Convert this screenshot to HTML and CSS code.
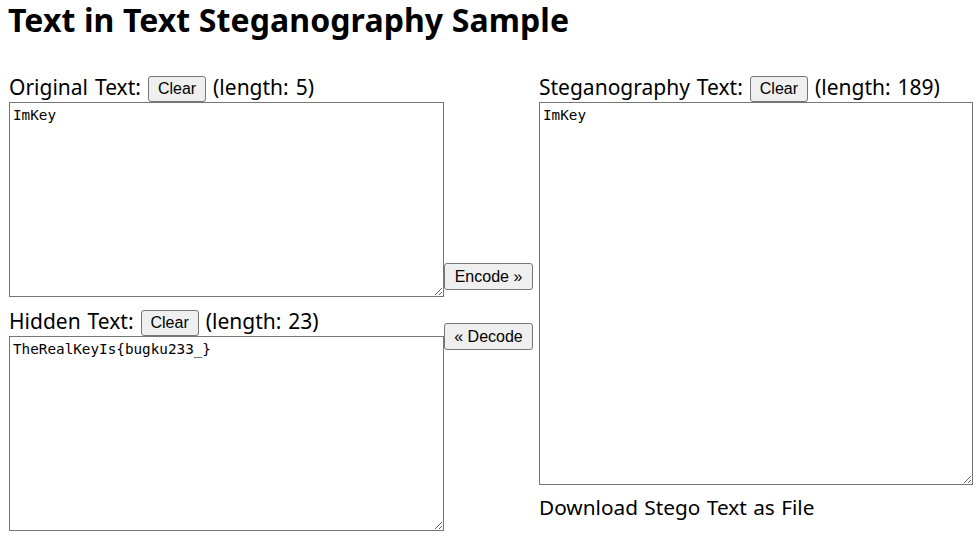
FILE: index.html
```html
<!DOCTYPE html>
<html>
<head>
<meta charset="utf-8">
<title>Text in Text Steganography Sample</title>
<link rel="stylesheet" href="styles.css">
</head>
<body>
<h1 class="title">Text in Text Steganography Sample</h1>
<div class="main">
  <div class="col left">
    <div class="label">Original Text: <button class="btn">Clear</button> (length: 5)</div>
    <textarea class="box small">ImKey</textarea>
    <div class="label second">Hidden Text: <button class="btn">Clear</button> (length: 23)</div>
    <textarea class="box small">TheRealKeyIs{bugku233_}</textarea>
  </div>
  <div class="col mid">
    <button class="btn">Encode &raquo;</button>
    <button class="btn">&laquo; Decode</button>
  </div>
  <div class="col right">
    <div class="label">Steganography Text: <button class="btn">Clear</button> (length: 189)</div>
    <textarea class="box big">ImKey</textarea>
    <div class="label download">Download Stego Text as File</div>
  </div>
</div>
</body>
</html>
```

FILE: styles.css
```css
html, body {
  margin: 0;
  padding: 0;
  background: #ffffff;
  color: #000000;
}
body {
  padding: 0 8px;
  font-family: "Noto Sans", "Open Sans", sans-serif;
}
.title {
  margin: 0 0 34px 0;
  padding-top: 1px;
  font-size: 32px;
  line-height: 37px;
  font-weight: 700;
  letter-spacing: 0.1px;
}
.main {
  display: grid;
  grid-template-columns: 435px 95px 434px;
  padding-left: 1px;
}
.col {
  display: flex;
  flex-direction: column;
  align-items: flex-start;
}
.label {
  font-size: 21px;
  line-height: 30px;
  height: 30px;
  white-space: nowrap;
  word-spacing: 1.5px;
}
.label.second {
  margin-top: 9px;
}
.label.download {
  margin-top: 7px;
  word-spacing: 1px;
  font-size: 20.8px;
}
.btn {
  font-family: "Liberation Sans", Arial, sans-serif;
  font-size: 16px;
  line-height: 18px;
  padding: 3px 9px;
  border: 1px solid #767676;
  border-radius: 3px;
  background: #efefef;
  color: #000;
  word-spacing: normal;
  vertical-align: 1px;
}
.box {
  display: block;
  box-sizing: border-box;
  margin: 0;
  border: 1px solid #767676;
  padding: 4px 3px 2px 3px;
  font-family: "DejaVu Sans Mono", "Liberation Mono", monospace;
  font-size: 14.3px;
  line-height: 17px;
  color: #000;
  background: #fff;
}
.box.small {
  width: 435px;
  height: 195px;
}
.box.big {
  width: 434px;
  height: 383px;
}
.mid {
  padding-top: 191px;
  gap: 33px;
}
.mid .btn {
  width: 89px;
  height: 27px;
  padding: 0;
}
```
